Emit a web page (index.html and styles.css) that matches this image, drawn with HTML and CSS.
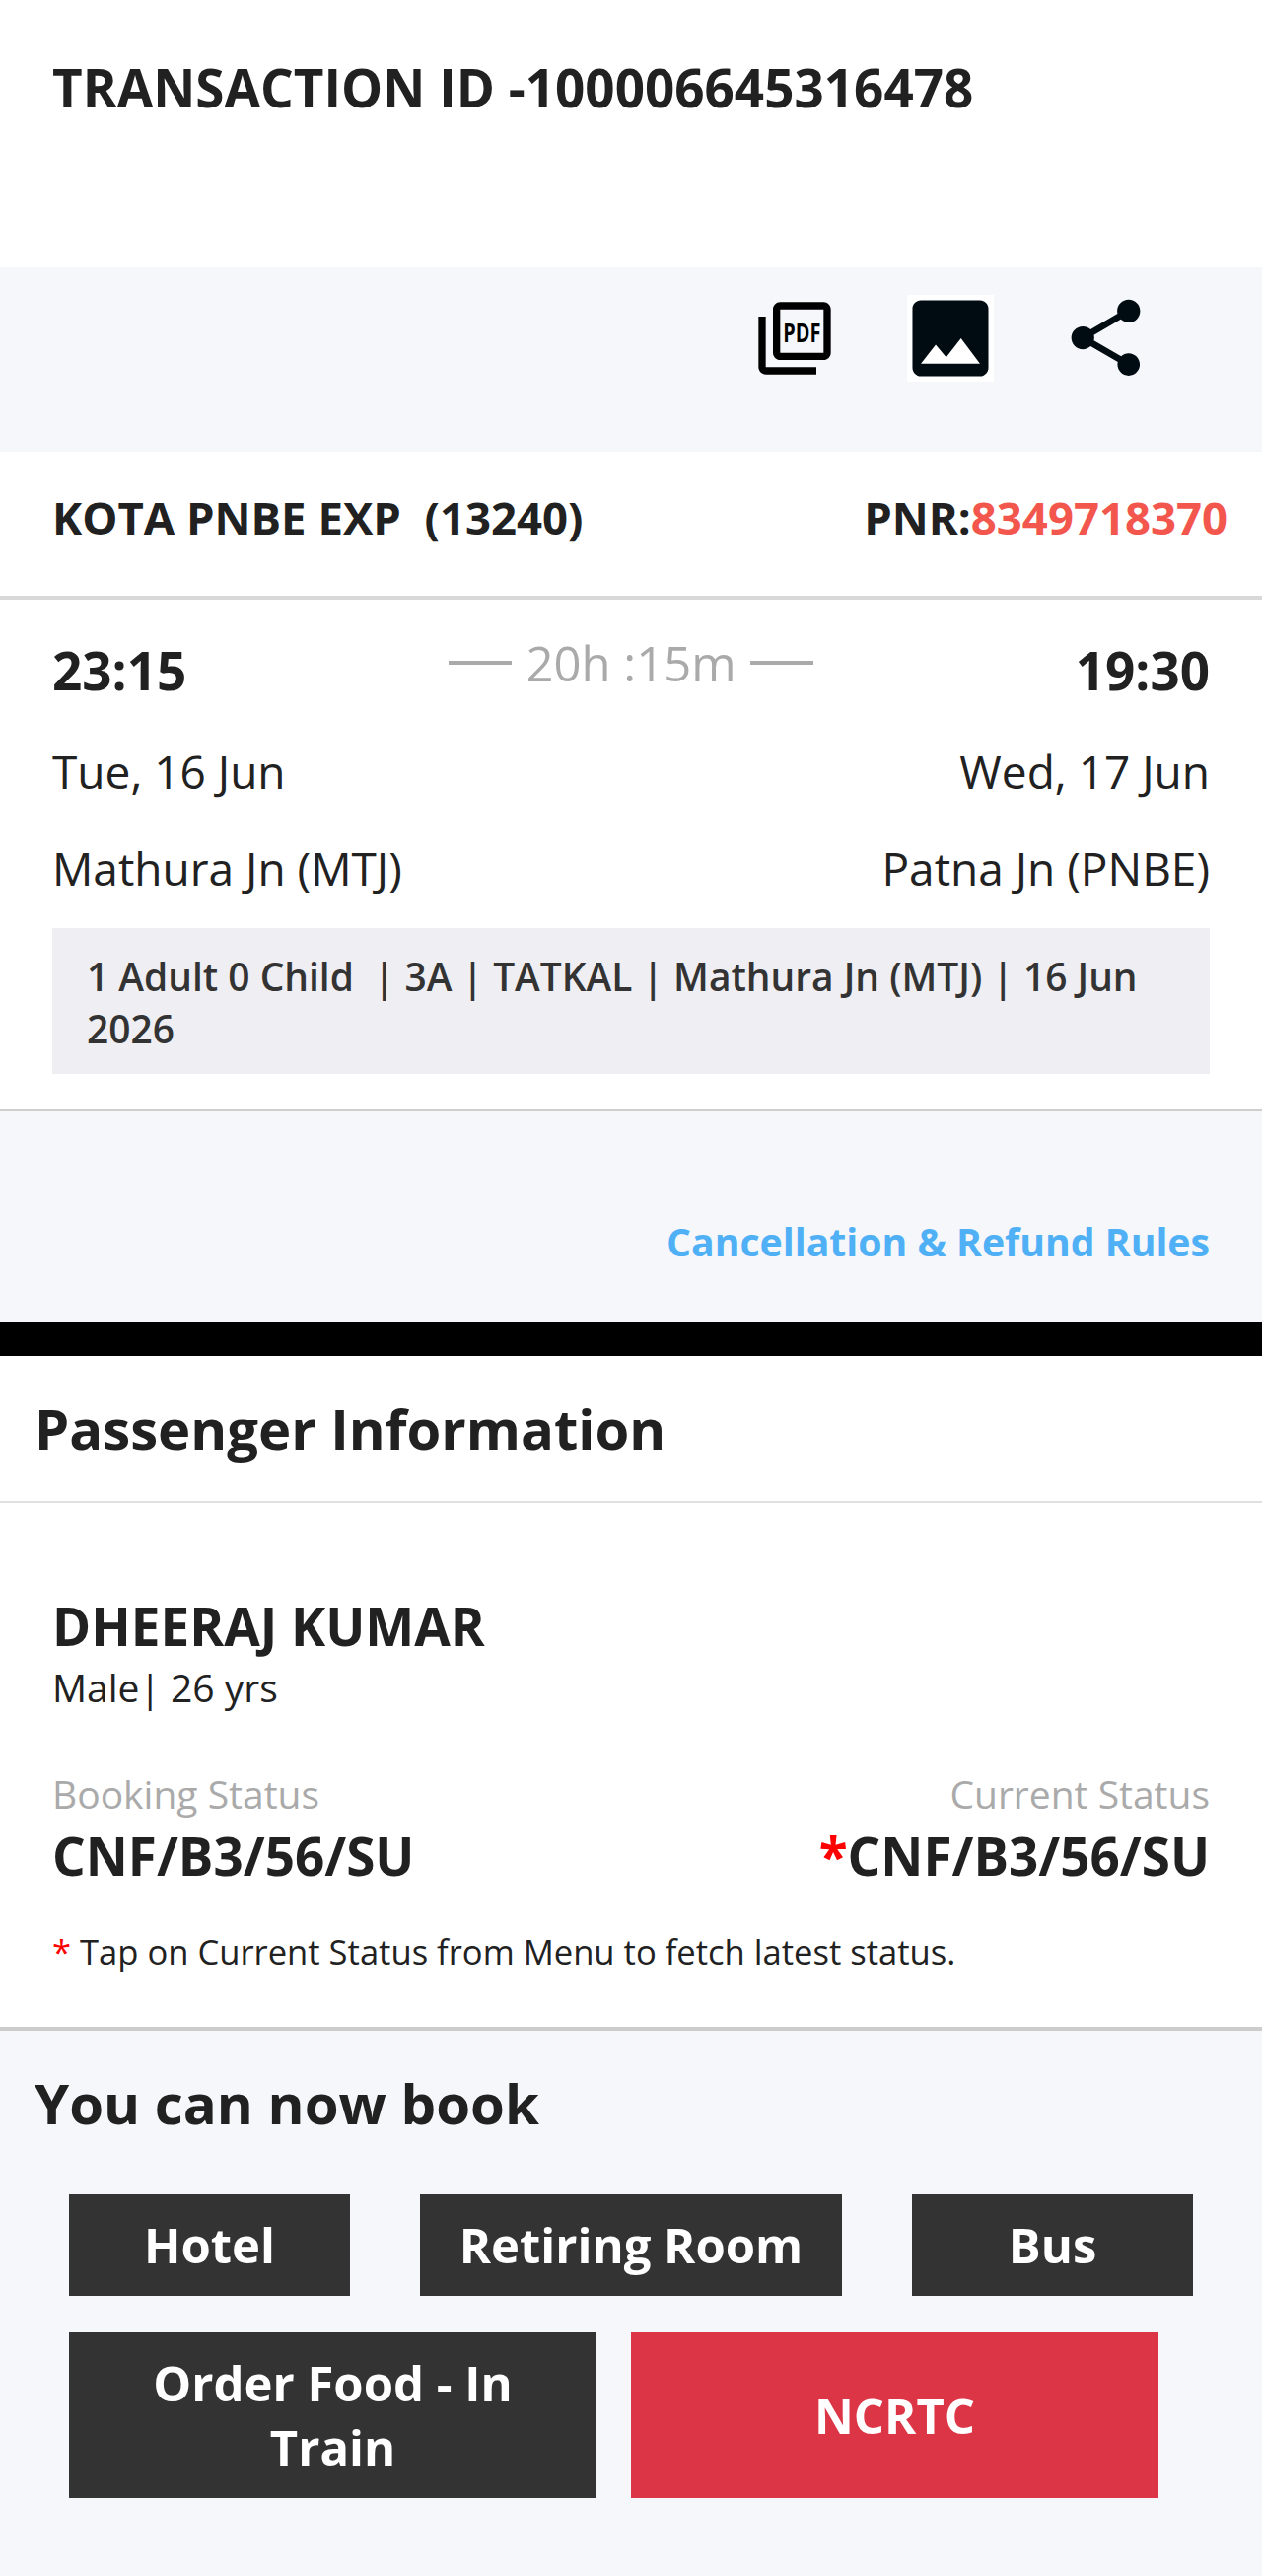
FILE: index.html
```html
<!DOCTYPE html>
<html lang="en">
<head>
  <meta charset="UTF-8" />
  <meta name="viewport" content="width=device-width, initial-scale=1.0"/>
  <title>Booking Details</title>
  <link rel="stylesheet" href="styles.css">
</head>
<body>

  <div class="txn-head">TRANSACTION ID -100006645316478</div>

  <div class="icon-bar">
    <svg class="icon-pdf" viewBox="0 0 24 24">
      <path d="M20 2H8c-1.1 0-2 .9-2 2v12c0 1.1.9 2 2 2h12c1.1 0 2-.9 2-2V4c0-1.1-.9-2-2-2zm0 14H8V4h12v12zM4 6H2v14c0 1.1.9 2 2 2h14v-2H4V6z"/>
      <text x="8.8" y="13.2" textLength="10.4" lengthAdjust="spacingAndGlyphs">PDF</text>
    </svg>
    <svg class="icon-image" viewBox="1.72 1.72 20.56 20.56">
      <path d="M21 19V5c0-1.1-.9-2-2-2H5c-1.1 0-2 .9-2 2v14c0 1.1.9 2 2 2h14c1.1 0 2-.9 2-2zM8.5 13.5l2.5 3.01L14.5 12l4.5 6H5l3.5-4.5z"/>
    </svg>
    <svg class="icon-share" viewBox="0 0 24 24">
      <path d="M18 16.08c-.76 0-1.44.3-1.96.77L8.91 12.7c.05-.23.09-.46.09-.7s-.04-.47-.09-.7l7.05-4.11c.54.5 1.25.81 2.04.81 1.66 0 3-1.34 3-3s-1.34-3-3-3-3 1.34-3 3c0 .24.04.47.09.7L8.04 9.81C7.5 9.31 6.79 9 6 9c-1.66 0-3 1.34-3 3s1.34 3 3 3c.79 0 1.5-.31 2.04-.81l7.12 4.16c-.05.21-.08.43-.08.65 0 1.61 1.31 2.92 2.92 2.92 1.61 0 2.92-1.31 2.92-2.92s-1.31-2.92-2.92-2.92z"/>
    </svg>
  </div>

  <div class="train-row">
    <span>KOTA PNBE EXP&nbsp; (13240)</span>
    <span>PNR:<span class="pnr">8349718370</span></span>
  </div>

  <div class="journey">
    <div class="row time-row">
      <span class="time">23:15</span>
      <span class="duration"><i class="dash"></i>20h :15m<i class="dash"></i></span>
      <span class="time">19:30</span>
    </div>
    <div class="row date-row">
      <span>Tue, 16 Jun</span>
      <span>Wed, 17 Jun</span>
    </div>
    <div class="row station-row">
      <span>Mathura Jn (MTJ)</span>
      <span>Patna Jn (PNBE)</span>
    </div>
    <div class="info-box">1 Adult 0 Child &nbsp;| 3A | TATKAL | Mathura Jn (MTJ) | 16 Jun 2026</div>
  </div>

  <div class="rules">
    <a href="#">Cancellation &amp; Refund Rules</a>
  </div>

  <div class="black-bar"></div>

  <div class="section-title">Passenger Information</div>

  <div class="passenger">
    <div class="pax-name">DHEERAJ KUMAR</div>
    <div class="pax-meta">Male| 26 yrs</div>
    <div class="row status-labels">
      <span>Booking Status</span>
      <span>Current Status</span>
    </div>
    <div class="row status-values">
      <span>CNF/B3/56/SU</span>
      <span><span class="star">*</span>CNF/B3/56/SU</span>
    </div>
    <div class="note"><span class="note-star">*</span> Tap on Current Status from Menu to fetch latest status.</div>
  </div>

  <div class="book">
    <div class="book-title">You can now book</div>
    <div class="btn-row first">
      <a class="btn small" href="#">Hotel</a>
      <a class="btn wide" href="#">Retiring Room</a>
      <a class="btn small" href="#">Bus</a>
    </div>
    <div class="btn-row second">
      <a class="btn half" href="#">Order Food - In Train</a>
      <a class="btn half red" href="#">NCRTC</a>
    </div>
  </div>

</body>
</html>
```

FILE: styles.css
```css
* {
  box-sizing: border-box;
}
body {
  margin: 0;
  font-family: "Open Sans", Arial, sans-serif;
  color: #212121;
  background: #f5f7fb;
}
.row {
  display: flex;
  justify-content: space-between;
}

.txn-head {
  height: 271px;
  padding: 53px 53px 0;
  background: #fff;
  font-size: 53px;
  line-height: 72px;
  font-weight: 700;
}

.icon-bar {
  height: 187px;
  padding: 25px 112px 0 0;
  display: flex;
  justify-content: flex-end;
  align-items: flex-start;
}
.icon-pdf {
  width: 88px;
  height: 88px;
  margin-top: 3px;
  fill: #000;
}
.icon-pdf text {
  font-family: "Open Sans", Arial, sans-serif;
  font-size: 7.3px;
  font-weight: 700;
}
.icon-image {
  width: 88px;
  height: 88px;
  margin: 3px 67px 0 70px;
  background: #fff;
  fill: #010b12;
}
.icon-share {
  width: 93px;
  height: 93px;
  fill: #010b12;
}

.train-row {
  height: 150px;
  padding: 0 35px 14px 53px;
  display: flex;
  justify-content: space-between;
  align-items: center;
  background: #fff;
  border-bottom: 4px solid #d8d8d8;
  font-size: 45.5px;
  font-weight: 700;
}
.pnr {
  color: #f2564d;
}

.journey {
  height: 519px;
  padding: 17px 53px 0;
  background: #fff;
  border-bottom: 3px solid #cfcfcf;
}
.time-row {
  height: 108px;
  align-items: center;
}
.time {
  font-size: 53px;
  font-weight: 700;
}
.duration {
  display: flex;
  align-items: center;
  margin-top: -14px;
  font-size: 49px;
  color: #aaa;
}
.dash {
  width: 64px;
  height: 4px;
  margin: 0 14px;
  background: #aaa;
}
.date-row {
  height: 98px;
  align-items: center;
  font-size: 46px;
}
.station-row {
  height: 98px;
  align-items: center;
  font-size: 46px;
}
.info-box {
  height: 148px;
  margin-top: 12px;
  padding: 22px 35px 0;
  background: #efeff3;
  font-size: 38.9px;
  line-height: 53px;
  font-weight: 600;
  color: #333;
}

.rules {
  height: 213px;
  padding: 105px 53px 0;
  text-align: right;
}
.rules a {
  font-size: 39.2px;
  font-weight: 700;
  color: #4fb0f6;
  text-decoration: none;
}

.black-bar {
  height: 35px;
  background: #000;
}

.section-title {
  height: 149px;
  padding-left: 35px;
  background: #fff;
  border-bottom: 2px solid #e0e0e0;
  font-size: 56.2px;
  line-height: 146px;
  font-weight: 700;
}

.passenger {
  height: 535px;
  padding: 90px 53px 0;
  background: #fff;
  border-bottom: 4px solid #ccc;
}
.pax-name {
  font-size: 53px;
  line-height: 70px;
  font-weight: 700;
}
.pax-meta {
  font-size: 39px;
  line-height: 54px;
}
.status-labels {
  margin-top: 54px;
  font-size: 39px;
  line-height: 54px;
  color: #aaa;
}
.status-values {
  font-size: 53px;
  line-height: 72px;
  font-weight: 700;
}
.star {
  color: #f00;
}
.note {
  margin-top: 37px;
  font-size: 34.6px;
  line-height: 48px;
}
.note-star {
  color: #f00;
}

.book {
  padding: 36px 0 0;
}
.book-title {
  padding-left: 35px;
  font-size: 56.4px;
  line-height: 76px;
  font-weight: 700;
}
.btn-row {
  display: flex;
  padding-left: 70px;
}
.btn-row.first {
  margin-top: 54px;
  padding-right: 70px;
  justify-content: space-between;
}
.btn-row.second {
  margin-top: 37px;
  gap: 35px;
}
.btn {
  display: flex;
  align-items: center;
  justify-content: center;
  background: #333;
  color: #fff;
  font-size: 49px;
  line-height: 65px;
  font-weight: 700;
  text-align: center;
  text-decoration: none;
}
.small {
  width: 285px;
  height: 103px;
}
.wide {
  width: 428px;
  height: 103px;
}
.half {
  width: 535px;
  height: 168px;
  padding: 0 40px;
}
.red {
  background: #dc3545;
}
```
